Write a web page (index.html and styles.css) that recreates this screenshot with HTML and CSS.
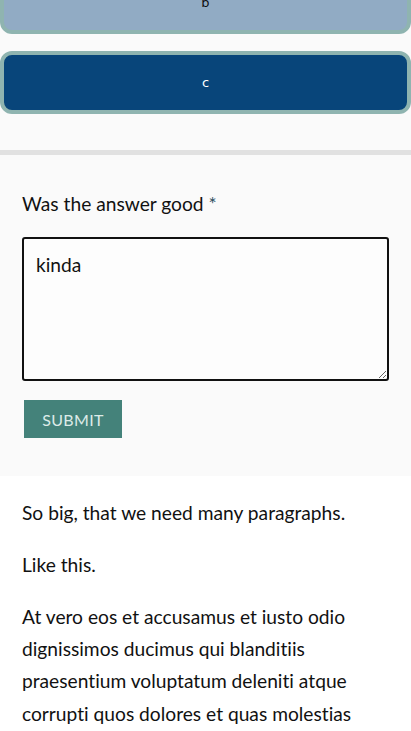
FILE: index.html
```html
<!DOCTYPE html>
<html lang="en">
<head>
<meta charset="utf-8">
<title>Answer</title>
<link rel="stylesheet" href="styles.css">
</head>
<body>
<div class="choices">
  <button class="choice choice-b" type="button">b</button>
  <button class="choice choice-c" type="button">c</button>
</div>
<form class="feedback">
  <label class="feedback-label" for="answer">Was the answer good <span class="req">*</span></label>
  <textarea id="answer" class="feedback-input">kinda</textarea>
  <button class="submit" type="button">SUBMIT</button>
</form>
<div class="article">
  <p>So big, that we need many paragraphs.</p>
  <p>Like this.</p>
  <p>At vero eos et accusamus et iusto odio dignissimos ducimus qui blanditiis praesentium voluptatum deleniti atque corrupti quos dolores et quas molestias excepturi sint occaecati cupiditate non provident, similique sunt in culpa qui officia deserunt mollitia animi.</p>
</div>
</body>
</html>
```
FILE: styles.css
```css
html, body {
  margin: 0;
  padding: 0;
  background: #ffffff;
}
body {
  font-family: Lato, "Open Sans", sans-serif;
  font-variant-ligatures: none;
  color: #111111;
  overflow: hidden;
}
.choices {
  background: #fafafa;
  display: flex;
  flex-direction: column;
  gap: 17px;
  margin-top: -29px;
  padding-bottom: 36px;
  border-bottom: 5px solid #e1e1e1;
}
.choice {
  display: block;
  width: 100%;
  height: 63px;
  margin: 0;
  border: 4px solid #8fb4b0;
  border-radius: 12px;
  font-family: "DejaVu Sans", sans-serif;
  font-size: 13px;
  padding: 0;
}
.choice-b {
  background: #91abc4;
  color: #111111;
}
.choice-c {
  background: #08457a;
  color: #ffffff;
}
.feedback {
  background: #fafafa;
  padding: 33px 22px 36px;
  display: flex;
  flex-direction: column;
  align-items: flex-start;
}
.feedback-label {
  font-size: 19.2px;
  line-height: 32px;
  color: #111111;
}
.req {
  color: #2f4f5f;
}
.feedback-input {
  box-sizing: border-box;
  width: 100%;
  height: 144px;
  margin: 17px 0 17px;
  border: 2px solid #111111;
  border-radius: 3px;
  background: #fdfdfd;
  padding: 14px 12px;
  font-family: Lato, sans-serif;
  font-variant-ligatures: none;
  font-size: 19.2px;
  line-height: 24px;
  color: #111111;
}
.submit {
  margin: 2px;
  height: 38px;
  width: 98px;
  border: none;
  background: #44827a;
  color: #dcebe8;
  font-family: Lato, sans-serif;
  font-size: 16px;
  letter-spacing: 0.3px;
  padding: 0;
}
.article {
  padding: 21px 22px 0;
}
.article p {
  margin: 0 0 19.4px;
  font-size: 19.2px;
  line-height: 32.4px;
}
```
